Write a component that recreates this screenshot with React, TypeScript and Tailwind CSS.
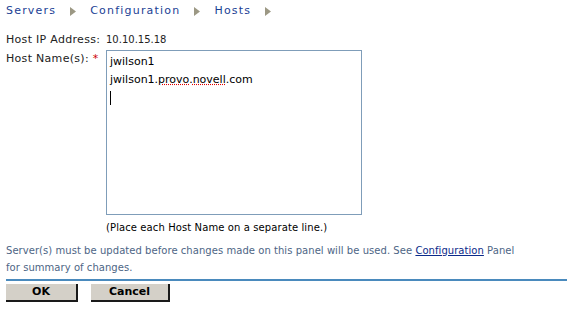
import React from "react";

const Arrow = () => (
  <svg width="6" height="9" viewBox="0 0 6 9" className="mx-[14px] inline-block">
    <polygon points="0,0 6,4.5 0,9" fill="#9c9884" />
  </svg>
);

export default function App() {
  return (
    <div className="w-[573px] h-[310px] bg-white overflow-hidden text-[11px]" style={{ fontFamily: '"DejaVu Sans", Verdana, sans-serif' }}>
      <div className="flex items-center pl-[6px] pt-[4px] h-[18px] text-[#1b3f95] tracking-[1.2px]">
        <span>Servers</span>
        <Arrow />
        <span>Configuration</span>
        <Arrow />
        <span>Hosts</span>
        <Arrow />
      </div>
      <div className="pl-[6px] mt-[14px] flex text-[#222]">
        <div className="w-[100px] tracking-[0.3px]">Host IP Address:</div>
        <div className="text-[10px] leading-[15px]">10.10.15.18</div>
      </div>
      <div className="pl-[6px] mt-[1px] flex text-[#222]">
        <div className="w-[100px] pt-[1px] tracking-[0.3px]">
          Host Name(s): <span className="text-[#cc0000]">*</span>
        </div>
        <div className="flex flex-col">
          <div className="w-[256px] h-[165px] border border-[#7f9db9] px-[3px] pt-[2px] text-[11px] leading-[18px] text-black">
            <div>jwilson1</div>
            <div>
              jwilson1.<span className="underline decoration-dotted decoration-[#e00000]">provo</span>.
              <span className="underline decoration-dotted decoration-[#e00000]">novell</span>.com
            </div>
            <div className="w-px h-[14px] bg-black mt-[2px]" />
          </div>
          <div className="mt-[5px] text-[10px] tracking-[0.1px] text-black">(Place each Host Name on a separate line.)</div>
        </div>
      </div>
      <div className="pl-[6px] pr-[6px] mt-[7px] text-[10px] tracking-[0.05px] text-[#4d6585] leading-[17px]">
        Server(s) must be updated before changes made on this panel will be used. See{" "}
        <span className="text-[#0b2a8a] underline">Configuration</span> Panel
        <br />
        for summary of changes.
      </div>
      <div className="mx-[6px] mt-[3px] h-[2px] bg-[#4a8abd]" />
      <div className="flex gap-[13px] pl-[6px] mt-[3px]">
        <button className="w-[72px] h-[18px] bg-[#d4d0c8] border-r-2 border-b-2 border-[#1a1a1a] font-bold text-[11px] text-black">OK</button>
        <button className="w-[79px] h-[18px] bg-[#d4d0c8] border-r-2 border-b-2 border-[#1a1a1a] font-bold text-[11px] text-black">Cancel</button>
      </div>
    </div>
  );
}
